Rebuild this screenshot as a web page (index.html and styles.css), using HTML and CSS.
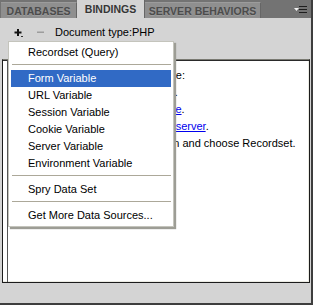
FILE: index.html
```html
<!DOCTYPE html>
<html>
<head>
    <title>Bindings</title>
    <meta name="viewport" content="width=device-width, initial-scale=1.0">
    <link rel="stylesheet" href="styles.css">
</head>
<body>
    <div class="panel">
        <div class="tab-bar">
            <div class="tab tab-databases">DATABASES</div>
            <div class="tab tab-bindings tab-active">BINDINGS</div>
            <div class="tab tab-behaviors">SERVER BEHAVIORS</div>
            <div class="tab-spacer">
                <svg class="panel-menu" width="13" height="9" viewBox="0 0 13 9">
                    <path d="M0 3h5l-2.5 3z" fill="#f2f2f2"/>
                    <path d="M5 1.5h8M5 4.5h8M5 7.5h8" stroke="#1e1e1e" stroke-width="1.2"/>
                </svg>
            </div>
        </div>

        <div class="toolbar">
            <svg class="btn-plus" width="10" height="14" viewBox="0 0 10 14">
                <path d="M3 4h2v7H3zM0.5 6.5h7v2h-7z" fill="#111"/>
                <path d="M7 11h2v1H7z" fill="#333"/>
            </svg>
            <svg class="btn-minus" width="8" height="14" viewBox="0 0 8 14">
                <path d="M0 6.5h7v1.5H0z" fill="#9d9d9d"/>
            </svg>
            <span class="doc-type">Document type:PHP</span>
        </div>

        <div class="content">
            <div class="content-inner">
                <p class="intro">To use dynamic data on this page:</p>
                <p class="step">1. Create a <a href="#">site</a> for this file.</p>
                <p class="step">2. Choose a <a href="#">document type</a>.</p>
                <p class="step">3. Set up the site's <a href="#">testing server</a>.</p>
                <p class="step">4. Press the plus (+) button and choose Recordset.</p>
            </div>
        </div>

        <!-- popup opened by the plus button -->
        <ul class="menu">
            <li class="menu-item">Recordset (Query)</li>
            <li class="menu-sep"></li>
            <li class="menu-item menu-item-active">Form Variable</li>
            <li class="menu-item">URL Variable</li>
            <li class="menu-item">Session Variable</li>
            <li class="menu-item">Cookie Variable</li>
            <li class="menu-item">Server Variable</li>
            <li class="menu-item">Environment Variable</li>
            <li class="menu-sep"></li>
            <li class="menu-item">Spry Data Set</li>
            <li class="menu-sep"></li>
            <li class="menu-item">Get More Data Sources...</li>
        </ul>
    </div>
</body>
</html>
```

FILE: styles.css
```css
body {
    margin: 0;
    font-family: 'Liberation Sans', Arial, sans-serif;
    font-size: 11px;
}

.panel {
    position: relative;
    width: 313px;
    height: 305px;
    box-sizing: border-box;
    background: #d4d4d4;
    border-right: 2px solid #3e3e3e;
    border-bottom: 2px solid #3e3e3e;
    display: flex;
    flex-direction: column;
}

/* Tabs */
.tab-bar {
    height: 18px;
    display: flex;
    align-items: flex-end;
    background: #737373;
    padding-left: 1px;
}

.tab {
    height: 16px;
    line-height: 16px;
    box-sizing: border-box;
    text-align: center;
    background: #8f8f8f;
    border-top: 1px solid #9c9c9c;
    border-right: 1px solid #666;
    color: #4c4c4c;
    font-weight: bold;
    font-size: 10.5px;
    text-shadow: 0 1px 0 rgba(255, 255, 255, 0.15);
    white-space: nowrap;
}

.tab-databases {
    width: 76px;
}

.tab-bindings {
    width: 68px;
}

.tab-behaviors {
    width: 116px;
}

.tab-active {
    height: 18px;
    line-height: 18px;
    background: #d4d4d4;
    border-top: none;
    color: #363636;
}

.tab-spacer {
    flex: 1;
    height: 18px;
    display: flex;
    justify-content: flex-end;
    align-items: center;
    padding-right: 4px;
}

/* Toolbar */
.toolbar {
    height: 41px;
    box-sizing: border-box;
    display: flex;
    align-items: flex-start;
    padding: 7px 0 0 14px;
}

.btn-plus,
.btn-minus {
    display: block;
}

.btn-minus {
    margin-left: 13px;
}

.doc-type {
    margin-left: 10px;
    line-height: 14px;
    color: #000;
}

/* Content area */
.content {
    height: 224px;
    margin: 0 1px 0 2px;
    box-sizing: border-box;
    background: #fff;
    border: 1px solid #1c1c1c;
    border-top-color: #7a7a72;
    box-shadow: inset 0 1px 0 #2a2a2a, inset -1px -1px 0 #ebebe3;
}

.content-inner {
    height: 100%;
    margin-left: 4px;
    box-sizing: border-box;
    border-left: 1px solid #555;
    padding: 7px 0 0 10px;
}

.content-inner p {
    margin: 0;
    line-height: 17px;
    white-space: nowrap;
}

.content-inner .step {
    padding-left: 29px;
}

.content-inner a {
    color: #0000ee;
}

/* Popup menu */
.menu {
    position: absolute;
    left: 8px;
    top: 41px;
    width: 166px;
    box-sizing: border-box;
    margin: 0;
    padding: 2px;
    list-style: none;
    background: #fff;
    border: 1px solid #c4c4bc;
    box-shadow: 2px 2px 1px #9d9d95;
}

.menu-item {
    height: 17px;
    line-height: 17px;
    padding-left: 17px;
    color: #000;
    white-space: nowrap;
}

.menu-item-active {
    background: #316ac5;
    color: #fff;
}

.menu-sep {
    height: 1px;
    margin: 3px 0 5px 1px;
    background: #aca899;
}
```
